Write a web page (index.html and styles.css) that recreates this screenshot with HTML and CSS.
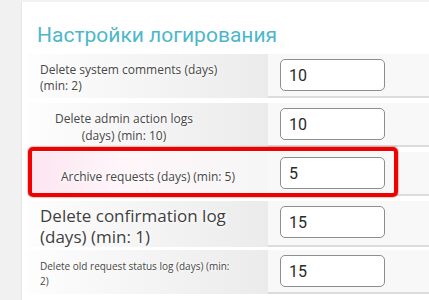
FILE: index.html
```html
<!DOCTYPE html>
<html lang="ru">
<head>
    <meta charset="UTF-8">
    <meta name="viewport" content="width=device-width, initial-scale=1.0">
    <title>Настройки логирования</title>
    <link rel="stylesheet" href="styles.css">
</head>
<body>
    <div class="card">
        <h2 class="title">Настройки логирования</h2>

        <div class="settings">
            <div class="row">
                <div class="label">Delete system comments (days) (min: 2)</div>
                <div class="value"><input type="text" value="10"></div>
            </div>

            <div class="row">
                <div class="label label-narrow">Delete admin action logs (days) (min: 10)</div>
                <div class="value"><input type="text" value="10"></div>
            </div>

            <div class="row row-marked">
                <div class="label label-center">Archive requests (days) (min: 5)</div>
                <div class="value"><input type="text" value="5"></div>
                <div class="highlight"></div>
            </div>

            <div class="row">
                <div class="label label-big">Delete confirmation log (days) (min: 1)</div>
                <div class="value"><input type="text" value="15"></div>
            </div>

            <div class="row">
                <div class="label label-small">Delete old request status log (days) (min: 2)</div>
                <div class="value"><input type="text" value="15"></div>
            </div>
        </div>
    </div>
</body>
</html>
```

FILE: styles.css
```css
* {
    margin: 0;
    padding: 0;
    box-sizing: border-box;
}

body {
    background: #f1f1f1;
    padding: 2px 0 0 21px;
    font-family: 'Open Sans', 'Noto Sans', sans-serif;
}

.card {
    background: white;
    border-left: 1px solid #e6e6e6;
    padding: 20px 0 0 6px;
    min-height: 298px;
}

.title {
    font-family: Roboto, 'Liberation Sans', sans-serif;
    font-weight: 400;
    font-size: 21px;
    line-height: 26px;
    color: #4db7ca;
    padding-left: 9px;
    margin-bottom: 6px;
}

.settings {
    display: flex;
    flex-direction: column;
    gap: 5px;
}

.row {
    position: relative;
    display: grid;
    grid-template-columns: 240px 1fr;
    height: 44px;
}

.label {
    display: flex;
    align-items: center;
    padding: 4px 28px 0 12px;
    background: linear-gradient(to right, #fdfdfd, #ebebeb);
    color: #474747;
    font-size: 12px;
    line-height: 16px;
    text-shadow: 0 0 6px #fff, 0 0 6px #fff, 0 0 3px #fff;
}

.label-narrow {
    justify-content: center;
    text-align: center;
    padding-right: 60px;
    line-height: 17px;
}

.label-center {
    justify-content: center;
    text-align: center;
    padding: 6px 0 0 0;
    background: linear-gradient(to right, #fbe4f0, #fff6fa 40%, #f6f6f6);
}

.label-big {
    font-size: 17px;
    line-height: 21px;
    color: #3f3f3f;
}

.label-small {
    font-size: 10px;
    line-height: 15px;
}

.value {
    background: #f8f8f8;
    border-bottom: 2px solid #dcdcdc;
    padding: 5px 0 0 12px;
}

.value input {
    width: 105px;
    height: 32px;
    border: 1px solid #8e8e8e;
    border-radius: 5px;
    background: white;
    padding: 0 8px;
    font-family: Roboto, 'Liberation Sans', sans-serif;
    font-size: 16px;
    color: #2a2a2a;
}

.highlight {
    position: absolute;
    top: -5px;
    left: 0;
    width: 370px;
    height: 50px;
    border: 4px solid #f20000;
    border-radius: 5px;
    box-shadow: 0 0 2px rgba(60, 0, 0, 0.7);
    pointer-events: none;
}
```
